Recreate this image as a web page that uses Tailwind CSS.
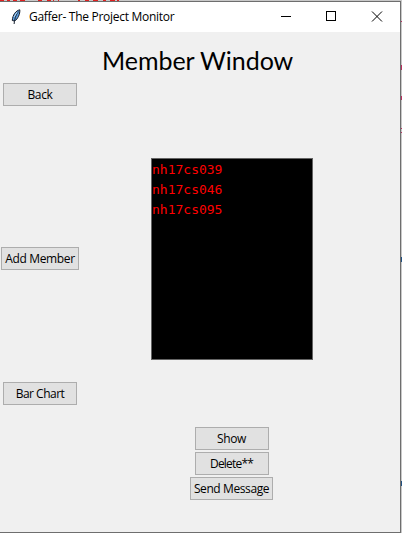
<!DOCTYPE html>
<html lang="en">
<head>
<meta charset="utf-8">
<title>Gaffer- The Project Monitor</title>
<script src="https://cdn.jsdelivr.net/npm/@tailwindcss/browser@4"></script>
</head>
<body class="relative w-[402px] h-[533px] overflow-hidden bg-[#c8c8c8] font-['Open_Sans','Noto_Sans',sans-serif] text-[12px] text-black">
<svg class="absolute left-0 top-0" width="402" height="533" shape-rendering="crispEdges">
  <path d="M0 0h4v1H0zM7 0h3v1H7zM13 0h4v1h-4zM20 0h5v1h-5zM38 0h4v1h-4zM47 0h4v1h-4zM53 0h1v1h-1zM58 0h1v1h-1zM78 0h2v1h-2zM85 0h4v1h-4zM93 0h5v1h-5zM103 0h3v1h-3zM110 0h5v1h-5zM117 0h2v1h-2z" fill="#e02020"/>
  <path d="M401 21h1v1h-1zM401 65h1v5h-1zM401 96h1v4h-1zM401 128h1v1h-1zM401 132h1v1h-1z" fill="#b83060"/>
  <path d="M401 257h1v5h-1zM401 481h1v5h-1z" fill="#205080"/>
</svg>
<main class="relative mt-px flex h-[532px] w-[401px] flex-col border-t border-r border-b border-[#6e6e6e] bg-[#f0f0f0]">
  <header class="flex h-[30px] shrink-0 items-center bg-white pl-[10px]">
    <svg class="shrink-0" width="12" height="16" viewBox="0 0 12 16">
      <path d="M9.800 .8C6 1.500 2.500 6 2.300 11.500l2.300 .6C7.800 10 10.200 5 9.800 .8z" fill="#5b9bdc" stroke="#171c26" stroke-width="1"/>
      <path d="M8.700 2.500C6.500 5 4.800 8 4.100 15" fill="none" stroke="#17202e" stroke-width="1"/>
      <path d="M7 3.200L4 8" stroke="#b4daf6" stroke-width="1"/>
    </svg>
    <h1 class="ml-[7px] w-[235px] whitespace-nowrap text-[12px] leading-4 tracking-[-0.28px]">Gaffer- The Project Monitor</h1>
    <svg class="shrink-0" width="136" height="30" viewBox="264 2 136 30" fill="none" stroke="#000" shape-rendering="crispEdges">
      <path d="M281 16.500h10"/>
      <rect x="326.500" y="11.500" width="9" height="9"/>
      <path d="M372 11.500l10 10M382 11.500l-10 10" shape-rendering="auto"/>
    </svg>
  </header>
  <h2 class="mt-[13px] ml-[102px] h-8 shrink-0 whitespace-nowrap font-['Lato',sans-serif] text-[25px] leading-[30px] tracking-[-0.05px]">Member Window</h2>
  <section class="mt-[6px] flex h-[322px] shrink-0 tracking-[-0.35px]">
    <nav class="flex w-[151px] flex-col items-start">
      <button class="ml-[3px] h-[23px] w-[74px] whitespace-nowrap border border-[#adadad] bg-[#e1e1e1] leading-[21px]">Back</button>
      <button class="mt-[141px] ml-px h-[23px] w-[78px] whitespace-nowrap border border-[#adadad] bg-[#e1e1e1] leading-[21px]">Add Member</button>
      <button class="mt-[112px] ml-[3px] h-[23px] w-[74px] whitespace-nowrap border border-[#adadad] bg-[#e1e1e1] leading-[21px] tracking-[-0.5px]">Bar Chart</button>
    </nav>
    <ul class="mt-[75px] h-[202px] w-[162px] border border-[#646464] bg-black pt-px font-['DejaVu_Sans_Mono',monospace] text-[13px] leading-5 tracking-normal text-[#ff0000]">
      <li>nh17cs039</li>
      <li>nh17cs046</li>
      <li>nh17cs095</li>
    </ul>
  </section>
  <footer class="mt-[22px] ml-[190px] flex w-[83px] flex-col items-center gap-[2px] tracking-[-0.4px]">
    <button class="h-[23px] w-[74px] whitespace-nowrap border border-[#adadad] bg-[#e1e1e1] leading-[21px]">Show</button>
    <button class="h-[23px] w-[74px] whitespace-nowrap border border-[#adadad] bg-[#e1e1e1] leading-[21px] tracking-[-0.8px]">Delete**</button>
    <button class="h-[23px] w-[83px] whitespace-nowrap border border-[#adadad] bg-[#e1e1e1] leading-[21px]">Send Message</button>
  </footer>
</main>
</body>
</html>
